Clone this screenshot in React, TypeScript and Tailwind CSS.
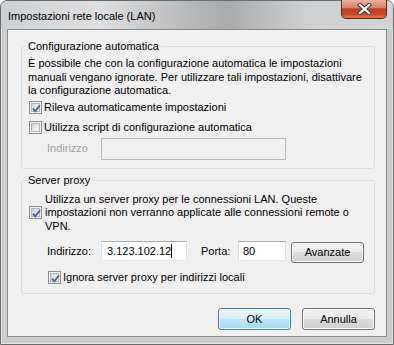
import React from 'react';

const Check = ({ checked }: { checked?: boolean }) => (
  <div className="relative w-[13px] h-[13px] shrink-0 border border-[#8e8f8f] bg-[#f4f4f4] p-[1px]">
    <div className="size-full border border-[#b2b6bc] bg-[linear-gradient(135deg,#cdd1d7_0%,#e9ebee_60%,#f8f8f8_100%)]" />
    {checked && (
      <svg className="absolute left-[1px] top-[1px]" width="11" height="11" viewBox="0 0 11 11">
        <path d="M2 5.6 L4.3 8.3 L9 2.2" fill="none" stroke="#4a5f97" strokeWidth="1.8" />
      </svg>
    )}
  </div>
);

const Button = ({ label, primary }: { label: string; primary?: boolean }) => (
  <button
    className={
      primary
        ? 'w-[73px] h-[22px] rounded-[3px] border border-[#3c7fb1] bg-[linear-gradient(#eaf6fd_0%,#d9f0fc_50%,#bee6fd_50%,#a7d9f5_100%)] shadow-[inset_0_0_0_1px_#f4fbfe]'
        : 'w-[73px] h-[22px] rounded-[3px] border border-[#707070] bg-[linear-gradient(#f2f2f2_0%,#ebebeb_50%,#dddddd_50%,#cfcfcf_100%)] shadow-[inset_0_0_0_1px_#fcfcfc]'
    }
  >
    {label}
  </button>
);

const App = () => {
  return (
    <div className="w-[394px] h-[345px] font-['Liberation_Sans',Arial,sans-serif] text-[11px] text-black">
      <div className="flex flex-col size-full rounded-t-[7px] border border-[#6b6b6b] bg-[#cbcdd0] shadow-[inset_0_0_0_1px_#e4e4e4]">
        {/* title bar */}
        <div className="flex items-start h-[28px] rounded-t-[6px] bg-[linear-gradient(90deg,#cdd0d3_0%,#dedfe0_25%,#b4b5b7_50%,#a9abad_58%,#cfd0d2_78%,#d2d4d6_100%)]">
          <span className="pl-[7px] pt-[9px] leading-[13px]">Impostazioni rete locale (LAN)</span>
          <div className="ml-auto mr-[6px] w-[46px] h-[19px] -mt-px flex items-center justify-center rounded-b-[5px] border border-t-0 border-[#5b2a22] bg-[linear-gradient(#eab2a2_0%,#dc806a_42%,#c5401f_50%,#c84729_78%,#e2794f_100%)]">
            <svg width="15" height="12" viewBox="0 0 15 12">
              <path d="M3 2 L12 10 M12 2 L3 10" stroke="#3c3c3c" strokeWidth="4.2" strokeLinecap="square" />
              <path d="M3 2 L12 10 M12 2 L3 10" stroke="#ffffff" strokeWidth="2.2" strokeLinecap="square" />
            </svg>
          </div>
        </div>

        {/* client area */}
        <div className="mx-[6px] h-[308px] border border-[#8a8b8c] bg-[#f0f0f0] flex flex-col">
          <fieldset className="mt-[10px] ml-[13px] w-[354px] rounded-[3px] border border-[#d5dfe5] pl-[4px] pr-[6px] pb-[8px]">
            <legend className="px-[2px] leading-[13px]">Configurazione automatica</legend>
            <p className="pl-[2px] pt-[4px] leading-[13.5px]">
              È possibile che con la configurazione automatica le impostazioni
              <br />
              manuali vengano ignorate. Per utilizzare tali impostazioni, disattivare
              <br />
              la configurazione automatica.
            </p>
            <div className="flex items-center h-[17px] mt-[1px] pl-[3px] gap-[2px]">
              <Check checked />
              <span>Rileva automaticamente impostazioni</span>
            </div>
            <div className="flex items-center h-[17px] mt-[3px] pl-[3px] gap-[2px]">
              <Check />
              <span>Utilizza script di configurazione automatica</span>
            </div>
            <div className="flex items-center mt-[2px] pl-[21px]">
              <span className="w-[54px] text-[#a3a3a3]">Indirizzo</span>
              <div className="w-[185px] h-[22px] border border-[#b5b9bd] bg-[#f0f0f0]" />
            </div>
          </fieldset>

          <fieldset className="mt-[5px] ml-[13px] w-[354px] rounded-[3px] border border-[#d5dfe5] pl-[4px] pr-[6px] pb-[7px]">
            <legend className="px-[2px] leading-[13px]">Server proxy</legend>
            <div className="flex items-center pt-[6px] pl-[3px] gap-[3px]">
              <Check checked />
              <p className="leading-[13.5px]">
                Utilizza un server proxy per le connessioni LAN. Queste
                <br />
                impostazioni non verranno applicate alle connessioni remote o
                <br />
                VPN.
              </p>
            </div>
            <div className="flex items-start mt-[8px] pl-[21px]">
              <span className="w-[54px] h-[20px] flex items-center">Indirizzo:</span>
              <div className="w-[86px] h-[20px] flex items-center pl-[5px] border border-[#abadb3] border-b-[#e3e9ef] border-x-[#dbdfe6] bg-white">
                <span>3.123.102.12</span>
                <span className="w-px h-[14px] bg-black" />
              </div>
              <span className="w-[51px] h-[20px] pl-[14px] flex items-center">Porta:</span>
              <div className="w-[48px] h-[20px] flex items-center pl-[4px] border border-[#abadb3] border-b-[#e3e9ef] border-x-[#dbdfe6] bg-white">
                80
              </div>
              <button className="ml-[5px] mt-[1px] w-[73px] h-[21px] rounded-[3px] border border-[#707070] bg-[linear-gradient(#f2f2f2_0%,#ebebeb_50%,#dddddd_50%,#cfcfcf_100%)] shadow-[inset_0_0_0_1px_#fcfcfc]">
                Avanzate
              </button>
            </div>
            <div className="flex items-center h-[17px] mt-[6px] pl-[22px] gap-[2px]">
              <Check checked />
              <span>Ignora server proxy per indirizzi locali</span>
            </div>
          </fieldset>

          <div className="flex justify-end gap-[11px] mt-[14px] mr-[11px]">
            <Button label="OK" primary />
            <Button label="Annulla" />
          </div>
        </div>
      </div>
    </div>
  );
};

export default App;
